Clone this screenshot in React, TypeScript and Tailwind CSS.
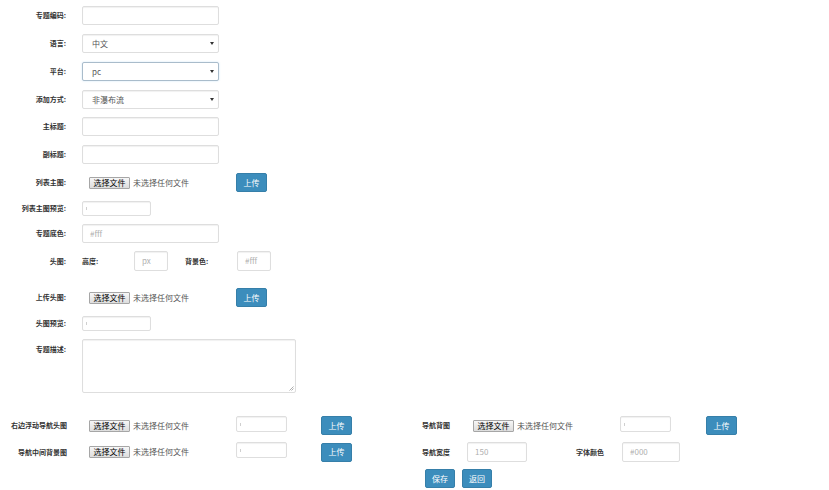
import React from "react";

const LBL = "w-[66px] shrink-0 text-right text-[7px] font-bold text-[#333] leading-none whitespace-nowrap";
const BOX = "shrink-0 border border-[#dedede] rounded-[2px] bg-white shadow-[inset_0_1px_1px_rgba(0,0,0,0.06)] flex items-center text-[8px] leading-none";

function Field({ cls, ph, mark }: { cls: string; ph?: string; mark?: boolean }) {
  return (
    <div className={`${BOX} ${cls} px-[7px] text-[#b0b0b0]`}>
      {ph}
      {mark && <span className="w-[1px] h-[3px] bg-[#cfcfcf]" />}
    </div>
  );
}

function Select({ value, focused }: { value: string; focused?: boolean }) {
  return (
    <div
      className={
        focused
          ? "w-[137px] h-[19px] shrink-0 border border-[#a9bccb] rounded-[2px] bg-white shadow-[0_0_2px_rgba(102,175,233,0.35)] flex items-center pl-[9px] pr-[4px] text-[8px] leading-none text-[#555]"
          : `${BOX} w-[137px] h-[19px] pl-[9px] pr-[4px] text-[#555]`
      }
    >
      <span className="flex-1">{value}</span>
      <svg width="4" height="3" viewBox="0 0 4 3">
        <path d="M0 0h4L2 3z" fill="#333" />
      </svg>
    </div>
  );
}

function FileIn({ cls }: { cls: string }) {
  return (
    <div className={`${cls} shrink-0 flex items-center leading-none`}>
      <span className="w-[41px] h-[12px] border border-[#a6a6a6] rounded-[1px] bg-gradient-to-b from-[#f7f7f7] to-[#dddddd] text-[8px] text-black flex items-center justify-center">
        选择文件
      </span>
      <span className="ml-[3px] text-[8px] text-[#555]">未选择任何文件</span>
    </div>
  );
}

function Btn({ text, cls }: { text: string; cls?: string }) {
  return (
    <button
      className={`${cls ?? ""} w-[31px] h-[19px] shrink-0 bg-[#3c8dbc] border border-[#367fa9] rounded-[2px] text-white text-[8px] leading-none flex items-center justify-center`}
    >
      {text}
    </button>
  );
}

export default function App() {
  return (
    <div className="w-[829px] h-[490px] bg-white overflow-hidden font-['Noto_Sans_CJK_SC','Noto_Sans',sans-serif] text-[#333]">
      <div className="flex flex-col pt-[6px]">
        <div className="flex items-center h-[19px]">
          <div className={LBL}>专题编码:</div>
          <Field cls="ml-[16px] w-[137px] h-[19px]" />
        </div>
        <div className="flex items-center h-[19px] mt-[9px]">
          <div className={LBL}>语言:</div>
          <div className="ml-[16px]">
            <Select value="中文" />
          </div>
        </div>
        <div className="flex items-center h-[19px] mt-[9px]">
          <div className={LBL}>平台:</div>
          <div className="ml-[16px]">
            <Select value="pc" focused />
          </div>
        </div>
        <div className="flex items-center h-[19px] mt-[9px]">
          <div className={LBL}>添加方式:</div>
          <div className="ml-[16px]">
            <Select value="非瀑布流" />
          </div>
        </div>
        <div className="flex items-center h-[19px] mt-[8px]">
          <div className={LBL}>主标题:</div>
          <Field cls="ml-[16px] w-[137px] h-[19px]" />
        </div>
        <div className="flex items-center h-[19px] mt-[9px]">
          <div className={LBL}>副标题:</div>
          <Field cls="ml-[16px] w-[137px] h-[19px]" />
        </div>
        <div className="flex items-center h-[19px] mt-[9px]">
          <div className={LBL}>列表主图:</div>
          <FileIn cls="ml-[23px] w-[147px]" />
          <Btn text="上传" />
        </div>
        <div className="flex items-center h-[15px] mt-[9px]">
          <div className={LBL}>列表主图预览:</div>
          <Field cls="ml-[16px] w-[69px] h-[15px] !px-[3px]" mark />
        </div>
        <div className="flex items-center h-[19px] mt-[8px]">
          <div className={LBL}>专题底色:</div>
          <Field cls="ml-[16px] w-[137px] h-[19px]" ph="#fff" />
        </div>
        <div className="flex items-center h-[20px] mt-[8px]">
          <div className={LBL}>头图:</div>
          <div className="ml-[16px] w-[52px] shrink-0 text-[7px] font-semibold leading-none">高度:</div>
          <Field cls="w-[34px] h-[20px]" ph="px" />
          <div className="ml-[17px] w-[52px] shrink-0 text-[7px] font-semibold leading-none">背景色:</div>
          <Field cls="w-[34px] h-[20px]" ph="#fff" />
        </div>
        <div className="flex items-center h-[19px] mt-[17px]">
          <div className={LBL}>上传头图:</div>
          <FileIn cls="ml-[23px] w-[147px]" />
          <Btn text="上传" />
        </div>
        <div className="flex items-center h-[15px] mt-[9px]">
          <div className={LBL}>头图预览:</div>
          <Field cls="ml-[16px] w-[69px] h-[15px] !px-[3px]" mark />
        </div>
        <div className="flex items-start mt-[8px]">
          <div className={`${LBL} pt-[7px]`}>专题描述:</div>
          <div className="ml-[16px] w-[214px] h-[54px] shrink-0 border border-[#dedede] rounded-[2px] bg-white shadow-[inset_0_1px_1px_rgba(0,0,0,0.06)] flex items-end justify-end p-[1px]">
            <svg width="5" height="5" viewBox="0 0 5 5">
              <path d="M4.5 0.5L0.5 4.5M4.5 2.5L2.5 4.5" stroke="#999" strokeWidth="0.8" />
            </svg>
          </div>
        </div>
        <div className="flex items-center h-[19px] mt-[23px]">
          <div className="w-[67px] shrink-0 text-right text-[7px] font-bold leading-none whitespace-nowrap">右边浮动导航头图</div>
          <FileIn cls="ml-[22px] w-[147px]" />
          <Field cls="w-[51px] h-[16px] !px-[3px] self-start" mark />
          <Btn text="上传" cls="ml-[34px]" />
          <div className="ml-[70px] w-[51px] shrink-0 text-[7px] font-bold leading-none">导航背图</div>
          <FileIn cls="w-[147px]" />
          <Field cls="w-[51px] h-[16px] !px-[3px] self-start" mark />
          <Btn text="上传" cls="ml-[35px]" />
        </div>
        <div className="flex items-center h-[20px] mt-[7px]">
          <div className="w-[67px] shrink-0 text-right text-[7px] font-bold leading-none whitespace-nowrap">导航中间背景图</div>
          <FileIn cls="ml-[22px] w-[147px]" />
          <Field cls="w-[51px] h-[16px] !px-[3px] self-start" mark />
          <Btn text="上传" cls="ml-[34px]" />
          <div className="ml-[70px] w-[45px] shrink-0 text-[7px] font-bold leading-none">导航宽度</div>
          <Field cls="w-[60px] h-[20px]" ph="150" />
          <div className="ml-[49px] w-[46px] shrink-0 text-[7px] font-bold leading-none">字体颜色</div>
          <Field cls="w-[58px] h-[20px]" ph="#000" />
        </div>
        <div className="flex items-center h-[19px] mt-[7px] pl-[425px]">
          <Btn text="保存" cls="!w-[30px]" />
          <Btn text="返回" cls="ml-[7px] !w-[30px]" />
        </div>
      </div>
    </div>
  );
}
